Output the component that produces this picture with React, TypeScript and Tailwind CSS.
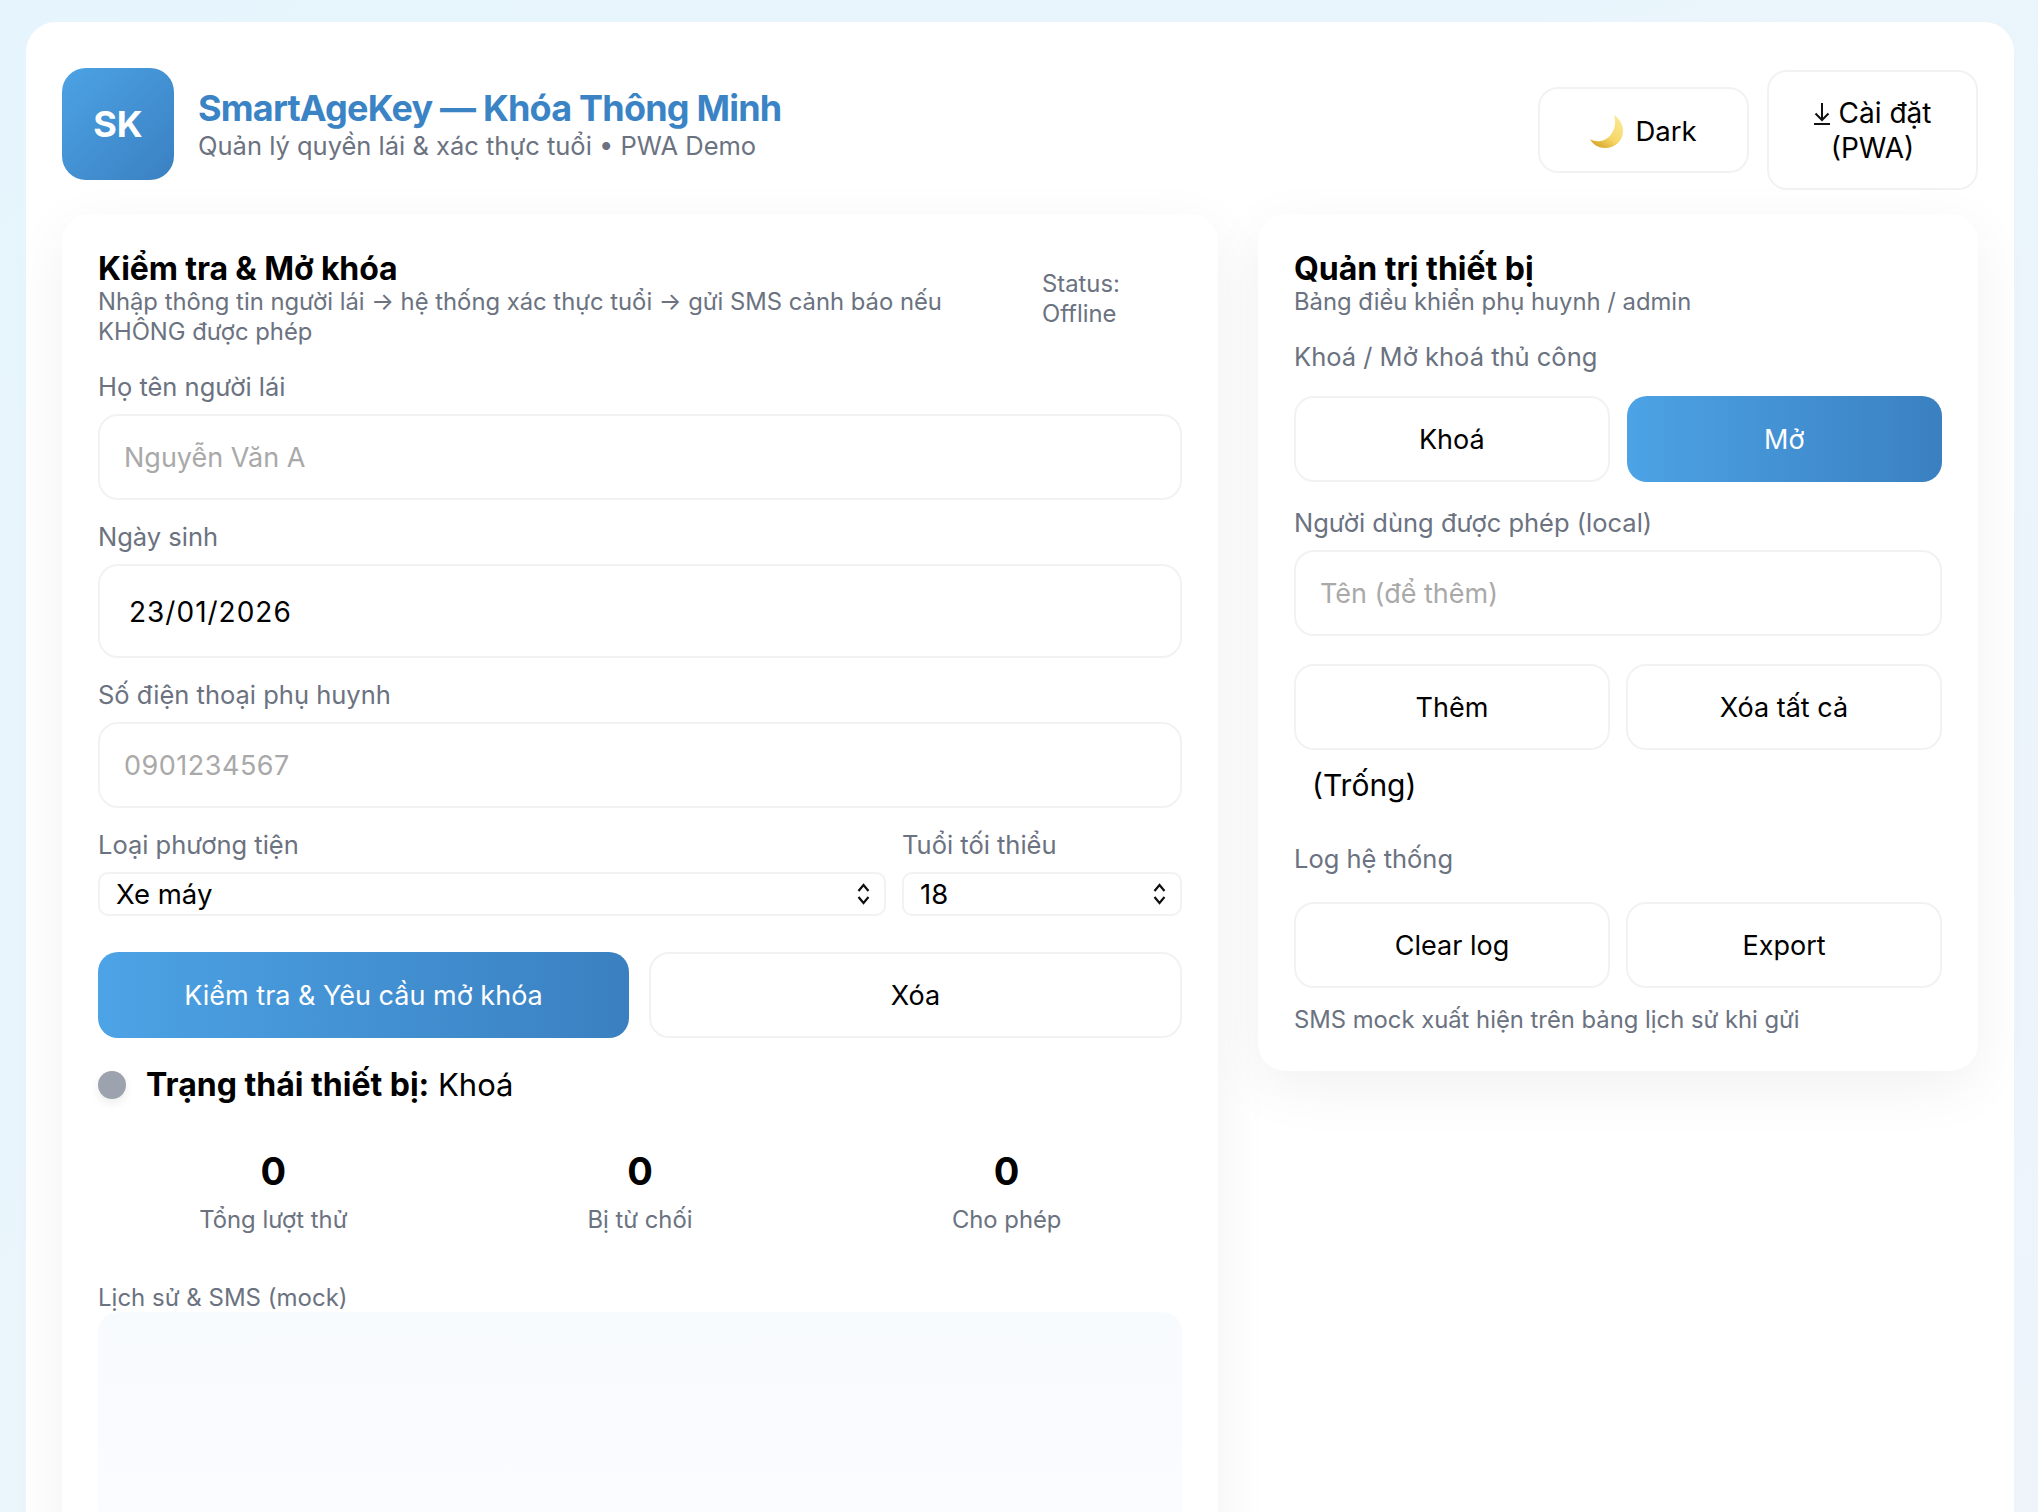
import type { ReactNode } from 'react';

const btn =
  'h-[86px] rounded-[20px] border-2 border-[#f1f2f4] bg-white pt-[2px] text-[27px] text-black flex items-center justify-center';
const primary =
  'h-[86px] rounded-[20px] bg-gradient-to-r from-[#4ca3e5] to-[#3a80c1] pt-[3px] text-[27px] text-white flex items-center justify-center';
const field =
  'w-full h-[86px] rounded-[20px] border-2 border-[#f1f2f4] bg-white px-[24px] text-[27px] text-black outline-none placeholder:text-[#a9a9a9]';
const label = 'block text-[25.5px] leading-[32px] text-[#6b7280]';
const muted = 'text-[23.800px] leading-[30px] text-[#6b7280]';

function Chevrons() {
  return (
    <svg
      viewBox="0 0 15 22"
      className="pointer-events-none absolute right-[15px] top-[11px] h-[22px] w-[15px]"
      fill="none"
      stroke="#111"
      strokeWidth="2.2"
    >
      <path d="M2.500 8l5-6 5 6M2.500 14l5 6 5-6" />
    </svg>
  );
}

function SelectBox({ options }: { options: string[] }) {
  return (
    <div className="relative w-full">
      <select className="h-[44px] w-full appearance-none rounded-[10px] border-2 border-[#f1f2f4] bg-white pl-[16px] text-[27.500px] leading-[40px] text-black outline-none">
        {options.map((o) => (
          <option key={o}>{o}</option>
        ))}
      </select>
      <Chevrons />
    </div>
  );
}

function Stat({ value, name }: { value: string; name: string }) {
  return (
    <div className="flex flex-col items-center">
      <div className="text-[38px] leading-[46px] font-bold text-black">{value}</div>
      <div className={`mt-[11px] ${muted}`}>{name}</div>
    </div>
  );
}

function Card({ className, children }: { className: string; children: ReactNode }) {
  return (
    <section className={`rounded-[28px] bg-white p-[36px] shadow-[0_16px_60px_rgba(0,0,0,0.06)] ${className}`}>
      {children}
    </section>
  );
}

export default function App() {
  return (
    <div
      className="h-[1512px] overflow-hidden bg-gradient-to-br from-[#e6f5fd] to-[#eef4fa] pt-[22px] pr-[24px] pl-[26px] text-black"
      style={{ fontFamily: 'Inter, "Noto Sans", sans-serif' }}
    >
      <main className="min-h-[1600px] rounded-[30px] bg-white px-[36px] pt-[46px]">
        {/* Header */}
        <header className="flex items-start justify-between">
          <div className="flex items-center gap-[24px]">
            <div className="flex h-[112px] w-[112px] items-center justify-center rounded-[24px] bg-gradient-to-br from-[#4ca3e5] to-[#3a80c1] text-[36px] font-bold text-white">
              SK
            </div>
            <div className="mt-[2px]">
              <h1 className="text-[36px] leading-[40px] font-bold tracking-[-0.8px] text-[#3a84c6]">
                SmartAgeKey — Khóa Thông Minh
              </h1>
              <p className="mt-[2px] text-[25.500px] leading-[32px] text-[#6b7280]">
                Quản lý quyền lái &amp; xác thực tuổi • PWA Demo
              </p>
            </div>
          </div>
          <div className="mt-[2px] flex items-center gap-[18px]">
            <button className="flex h-[86px] w-[211px] items-center justify-center gap-[12px] rounded-[20px] border-2 border-[#f1f2f4] bg-white pt-[3px] text-[27.500px]">
              <svg viewBox="0 0 33 33" className="h-[33px] w-[33px]">
                <defs>
                  <linearGradient id="moon" x1="1" y1="0" x2="0.3" y2="1">
                    <stop offset="0" stopColor="#fbeb9c" />
                    <stop offset="0.65" stopColor="#f6d768" />
                    <stop offset="1" stopColor="#d9a92e" />
                  </linearGradient>
                </defs>
                <path d="M24 0C30 4 33 10 33 16C33 26 25 33 15 33C9 33 3 30 0 24C5 27 11 27 16 24C24 19 27 9 24 0Z" fill="url(#moon)" />
              </svg>
              Dark
            </button>
            <button className="h-[120px] w-[211px] rounded-[20px] border-2 border-[#f1f2f4] bg-white pt-[2px] text-[28px] leading-[35px]">
              <span className="flex items-center justify-center gap-[9px]">
                <svg viewBox="0 0 16 22" className="h-[22px] w-[16px]" fill="none" stroke="#111" strokeWidth="2">
                  <path d="M8 0v17M1.500 10.500L8 17l6.500-6.500M0 21h16" />
                </svg>
                Cài đặt
              </span>
              (PWA)
            </button>
          </div>
        </header>

        <div className="mt-[24px] flex items-start gap-[40px]">
          {/* Left column */}
          <Card className="w-[1156px] shrink-0">
            <div className="flex items-start justify-between">
              <div className="w-[880px]">
                <h2 className="mt-[1px] text-[32px] leading-[36px] font-bold tracking-[-0.1px]">Kiểm tra &amp; Mở khóa</h2>
                <p className={muted}>
                  Nhập thông tin người lái → hệ thống xác thực tuổi → gửi SMS cảnh báo nếu KHÔNG được phép
                </p>
              </div>
              <div className={`mt-[19px] w-[140px] ${muted}`}>
                Status:
                <br />
                Offline
              </div>
            </div>

            <label className={`${label} mt-[24px] mb-[11px]`}>Họ tên người lái</label>
            <input className={field} placeholder="Nguyễn Văn A" />

            <label className={`${label} mt-[21px] mb-[11px]`}>Ngày sinh</label>
            <input className={`${field} h-[94px] pt-[2px] pl-[29px] text-[28px] tracking-[1px]`} defaultValue="23/01/2026" />

            <label className={`${label} mt-[21px] mb-[11px]`}>Số điện thoại phụ huynh</label>
            <input className={`${field} placeholder:tracking-[0.5px]`} placeholder="0901234567" />

            <div className="mt-[21px] flex gap-[16px]">
              <div className="w-[788px]">
                <label className={`${label} mb-[11px]`}>Loại phương tiện</label>
                <SelectBox options={['Xe máy', 'Ô tô']} />
              </div>
              <div className="w-[280px]">
                <label className={`${label} mb-[11px]`}>Tuổi tối thiểu</label>
                <SelectBox options={['18', '16']} />
              </div>
            </div>

            <div className="mt-[36px] flex gap-[20px]">
              <button className={`${primary} w-[531px]`}>Kiểm tra &amp; Yêu cầu mở khóa</button>
              <button className={`${btn} w-[533px]`}>Xóa</button>
            </div>

            <div className="mt-[27px] flex items-center gap-[20px]">
              <span className="h-[28px] w-[28px] rounded-full bg-[#9ca3af] shadow-[0_4px_10px_rgba(0,0,0,0.08)]" />
              <p className="text-[31px] leading-[40px]">
                <strong className="text-[32px] font-bold">Trạng thái thiết bị:</strong> Khoá
              </p>
            </div>

            <div className="mt-[43px] grid grid-cols-3 gap-[16px]">
              <Stat value="0" name="Tổng lượt thử" />
              <Stat value="0" name="Bị từ chối" />
              <Stat value="0" name="Cho phép" />
            </div>

            <label className="mt-[49px] block text-[24px] leading-[28px] text-[#6b7280]">Lịch sử &amp; SMS (mock)</label>
            <div className="h-[360px] rounded-[20px] bg-gradient-to-b from-[#f8fbfe] to-[#fbfcfe]" />
          </Card>

          {/* Right column */}
          <Card className="w-[720px] shrink-0">
            <h2 className="mt-[1px] text-[32px] leading-[36px] font-bold">Quản trị thiết bị</h2>
            <p className={muted}>Bảng điều khiển phụ huynh / admin</p>

            <label className={`${label} mt-[24px]`}>Khoá / Mở khoá thủ công</label>
            <div className="mt-[23px] grid grid-cols-2 gap-[17px]">
              <button className={btn}>Khoá</button>
              <button className={primary}>Mở</button>
            </div>

            <label className={`${label} mt-[25px] mb-[11px]`}>Người dùng được phép (local)</label>
            <input className={field} placeholder="Tên (để thêm)" />

            <div className="mt-[28px] grid grid-cols-2 gap-[16px]">
              <button className={btn}>Thêm</button>
              <button className={btn}>Xóa tất cả</button>
            </div>

            <div className="mt-[15px] pl-[18px] text-[30px] leading-[40px]">(Trống)</div>

            <label className={`${label} mt-[38px]`}>Log hệ thống</label>
            <div className="mt-[27px] grid grid-cols-2 gap-[16px]">
              <button className={btn}>Clear log</button>
              <button className={btn}>Export</button>
            </div>
            <p className={`mt-[17px] ${muted}`}>SMS mock xuất hiện trên bảng lịch sử khi gửi</p>
          </Card>
        </div>
      </main>
    </div>
  );
}
